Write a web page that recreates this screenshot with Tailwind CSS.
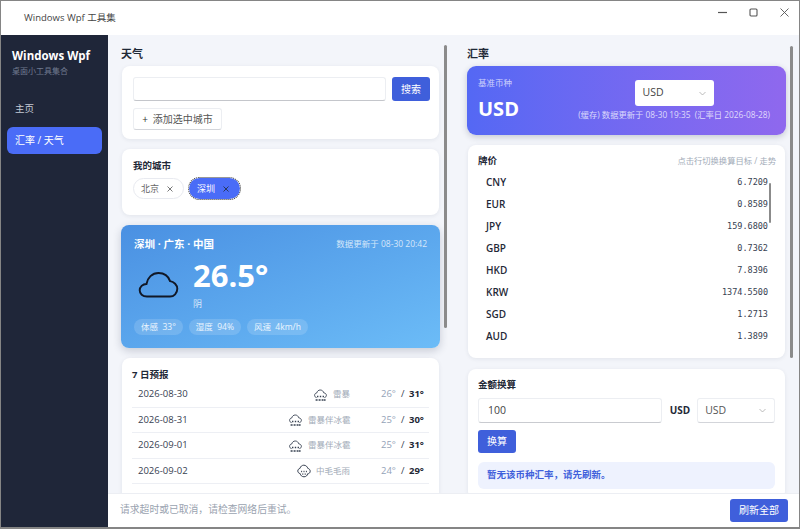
<!DOCTYPE html>
<html lang="zh-CN">
<head>
    <meta charset="UTF-8">
    <title>Windows Wpf 工具集</title>
    <script src="https://cdn.jsdelivr.net/npm/@tailwindcss/browser@4"></script>
</head>
<body class="w-[800px] h-[529px] overflow-hidden bg-white font-['Open_Sans','Noto_Sans_CJK_SC',sans-serif] text-[#1f2937]">
    <div class="flex flex-col w-[800px] h-[529px] border border-[#858585] border-b-2">
        <!-- title bar -->
        <div class="flex items-center h-[34px] shrink-0 bg-white">
            <span class="ml-[23px] text-[9.5px] text-[#444]">Windows Wpf 工具集</span>
            <div class="ml-auto self-start mt-[7px] mr-[10px] flex items-center gap-[22px] text-[#555]">
                <svg class="w-[9px] h-[9px]" viewBox="0 0 9 9"><path d="M0 4.5h9" stroke="currentColor" stroke-width="1.2"/></svg>
                <svg class="w-[9px] h-[9px]" viewBox="0 0 9 9"><rect x="1" y="1" width="7" height="7" rx="1" fill="none" stroke="currentColor" stroke-width="1.1"/></svg>
                <svg class="w-[9px] h-[9px]" viewBox="0 0 9 9"><path d="M.5.5l8 8M8.5.5l-8 8" stroke="currentColor" stroke-width="0.9"/></svg>
            </div>
        </div>
        <div class="flex flex-1 min-h-0">
            <!-- sidebar -->
            <aside class="w-[107px] shrink-0 bg-[#1f2639] px-[6px] pt-[13px]">
                <div class="pl-[5px] text-[11.5px] leading-[16px] font-bold text-white">Windows Wpf</div>
                <div class="pl-[5px] text-[8px] leading-[13px] text-[#6f7a90]">桌面小工具集合</div>
                <div class="mt-[19px] h-[26px] pl-[8px] flex items-center text-[9.5px] text-[#c5cad5]">主页</div>
                <div class="mt-[5px] h-[27px] pl-[8px] flex items-center rounded-[6px] bg-[#4a6cf7] text-[10px] text-white">汇率 / 天气</div>
            </aside>
            <div class="flex-1 min-w-0 flex flex-col bg-[#f3f5fa]">
                <div class="flex flex-1 min-h-0">
                    <!-- weather column -->
                    <div class="relative w-[345px] shrink-0 overflow-hidden pl-[13px] pr-[13px] pt-[10px]">
                        <h2 class="text-[11px] leading-[18px] font-bold text-[#1f2937]">天气</h2>
                        <div class="mt-[3px] mx-[1px] h-[73px] rounded-[8px] bg-white shadow-[0_1px_4px_rgba(30,40,70,0.08)] pl-[11px] pr-[9px] pt-[11px]">
                            <div class="flex gap-[6px]">
                                <div class="flex-1 h-[24px] rounded-[3px] bg-white border border-[#eceef2] border-b-[#c4c6cb]"></div>
                                <div class="w-[38px] h-[24px] rounded-[3px] bg-[#3f5fdb] flex items-center justify-center text-[10px] text-white">搜索</div>
                            </div>
                            <div class="mt-[7px] w-[89px] h-[22px] rounded-[3px] bg-white border border-[#eceef2] border-b-[#d3d5da] flex items-center justify-center gap-[5px] text-[10px] text-[#555]">
                                <span class="text-[#333]">+</span><span>添加选中城市</span>
                            </div>
                        </div>
                        <div class="mt-[10px] mx-[1px] h-[66px] rounded-[8px] bg-white shadow-[0_1px_4px_rgba(30,40,70,0.08)] px-[11px] pt-[9px]">
                            <div class="text-[9.5px] leading-[16px] font-bold text-[#1f2937]">我的城市</div>
                            <div class="mt-[4px] flex gap-[5px]">
                                <div class="w-[51px] h-[21px] rounded-full bg-white border border-[#e8eaf0] flex items-center pl-[7px] gap-[8px] text-[9px] text-[#666]"><span>北京</span>
                                    <svg class="w-[6px] h-[6px]" viewBox="0 0 6 6"><path d="M.5.5l5 5M5.5.5l-5 5" stroke="#555" stroke-width="0.8"/></svg></div>
                                <div class="w-[51px] h-[21px] rounded-full bg-[#4a6cf7] outline-1 outline-dotted outline-[#333] flex items-center pl-[8px] gap-[8px] text-[9px] text-white"><span>深圳</span>
                                    <svg class="w-[6px] h-[6px]" viewBox="0 0 6 6"><path d="M.5.5l5 5M5.5.5l-5 5" stroke="#1f2937" stroke-width="0.8"/></svg></div>
                            </div>
                        </div>
                        <div class="mt-[10px] h-[123px] rounded-[8px] bg-gradient-to-br from-[#4a90e2] to-[#6cbcf7] shadow-[0_3px_8px_rgba(30,40,70,0.2)] px-[13px] pt-[10px] text-white">
                            <div class="flex justify-between items-center">
                                <span class="text-[10.5px] leading-[18px] font-bold">深圳 · 广东 · 中国</span>
                                <span class="text-[8.5px] text-white/75">数据更新于 08-30 20:42</span>
                            </div>
                            <div class="flex mt-[2px]">
                                <svg class="ml-[4px] mt-[16px] w-[41px] h-[27px]" viewBox="0 0 42 28"><path d="M9 26.5C4.5 26.5 1.5 23.5 1.5 20C1.5 16.5 4.5 13.5 8.5 13.5C9.5 7 14.5 2 21 2C27.5 2 31.5 6 33 10.5C37 11 40.5 14.5 40.5 18.5C40.5 23 37 26.5 33 26.5Z" fill="none" stroke="#111827" stroke-width="2"/></svg>
                                <div class="ml-[14px]">
                                    <div class="text-[31px] leading-[41px] font-bold">26.5°</div>
                                    <div class="text-[9px] leading-[16px] text-white/75">阴</div>
                                </div>
                            </div>
                            <div class="mt-[7px] flex gap-[6px] text-[8.5px] text-white/85">
                                <span class="h-[16px] flex items-center px-[7px] rounded-full bg-white/15">体感&nbsp;&nbsp;33°</span>
                                <span class="h-[16px] flex items-center px-[7px] rounded-full bg-white/15">湿度&nbsp;&nbsp;94%</span>
                                <span class="h-[16px] flex items-center px-[7px] rounded-full bg-white/15">风速&nbsp;&nbsp;4km/h</span>
                            </div>
                        </div>
                        <div class="mt-[10px] mx-[1px] h-[160px] rounded-[8px] bg-white shadow-[0_1px_4px_rgba(30,40,70,0.08)] px-[10px] pt-[9px]">
                            <div class="text-[9.5px] leading-[15px] font-bold text-[#1f2937]">7 日预报</div>
                            <div class="flex items-center h-[26px] pl-[6px] pr-[5px] border-b border-[#edeff4] text-[9.5px]">
                                <span class="text-[#374151]">2026-08-30</span>
                                <svg class="ml-auto w-[13px] h-[12px]" viewBox="0 0 13 12"><path d="M2.6 8.6C1.3 8.4.6 7.4.6 6.3.6 5 1.6 4 2.8 3.9 3.2 2.1 4.6 1 6.2 1 8 1 9.4 2.2 9.8 3.9 11.2 4 12.4 5 12.4 6.3 12.4 7.4 11.6 8.4 10.4 8.6" fill="none" stroke="#374151" stroke-width="0.9"/><path d="M3 6.8h1.4v1.4H3zM5.8 6.8h1.4v1.4H5.8zM8.6 6.8H10v1.4H8.6z" fill="#374151"/><path d="M1.6 11h2M4.6 11h2M7.6 11h2M10 11h1.6" stroke="#374151" stroke-width="1.3"/></svg>
                                <span class="ml-[6px] w-[18px] whitespace-nowrap text-[8.5px] text-[#a2abb8]">雷暴</span>
                                <span class="ml-[30px] w-[14px] text-[#94a3b8]">26°</span>
                                <span class="ml-[6px] w-[3px] text-[#374151]">/</span>
                                <span class="ml-[5px] w-[15px] font-bold text-[#1f2937]">31°</span>
                            </div>
                            <div class="flex items-center h-[25.4px] pl-[6px] pr-[5px] border-b border-[#edeff4] text-[9.5px]">
                                <span class="text-[#374151]">2026-08-31</span>
                                <svg class="ml-auto w-[13px] h-[12px]" viewBox="0 0 13 12"><path d="M2.6 8.6C1.3 8.4.6 7.4.6 6.3.6 5 1.6 4 2.8 3.9 3.2 2.1 4.6 1 6.2 1 8 1 9.4 2.2 9.8 3.9 11.2 4 12.4 5 12.4 6.3 12.4 7.4 11.6 8.4 10.4 8.6" fill="none" stroke="#374151" stroke-width="0.9"/><path d="M3 6.8h1.4v1.4H3zM5.8 6.8h1.4v1.4H5.8zM8.6 6.8H10v1.4H8.6z" fill="#374151"/><path d="M1.6 11h2M4.6 11h2M7.6 11h2M10 11h1.6" stroke="#374151" stroke-width="1.3"/></svg>
                                <span class="ml-[6px] w-[43px] whitespace-nowrap text-[8.5px] text-[#a2abb8]">雷暴伴冰雹</span>
                                <span class="ml-[30px] w-[14px] text-[#94a3b8]">25°</span>
                                <span class="ml-[6px] w-[3px] text-[#374151]">/</span>
                                <span class="ml-[5px] w-[15px] font-bold text-[#1f2937]">30°</span>
                            </div>
                            <div class="flex items-center h-[25.4px] pl-[6px] pr-[5px] border-b border-[#edeff4] text-[9.5px]">
                                <span class="text-[#374151]">2026-09-01</span>
                                <svg class="ml-auto w-[13px] h-[12px]" viewBox="0 0 13 12"><path d="M2.6 8.6C1.3 8.4.6 7.4.6 6.3.6 5 1.6 4 2.8 3.9 3.2 2.1 4.6 1 6.2 1 8 1 9.4 2.2 9.8 3.9 11.2 4 12.4 5 12.4 6.3 12.4 7.4 11.6 8.4 10.4 8.6" fill="none" stroke="#374151" stroke-width="0.9"/><path d="M3 6.8h1.4v1.4H3zM5.8 6.8h1.4v1.4H5.8zM8.6 6.8H10v1.4H8.6z" fill="#374151"/><path d="M1.6 11h2M4.6 11h2M7.6 11h2M10 11h1.6" stroke="#374151" stroke-width="1.3"/></svg>
                                <span class="ml-[6px] w-[43px] whitespace-nowrap text-[8.5px] text-[#a2abb8]">雷暴伴冰雹</span>
                                <span class="ml-[30px] w-[14px] text-[#94a3b8]">25°</span>
                                <span class="ml-[6px] w-[3px] text-[#374151]">/</span>
                                <span class="ml-[5px] w-[15px] font-bold text-[#1f2937]">31°</span>
                            </div>
                            <div class="flex items-center h-[25.4px] pl-[6px] pr-[5px] border-b border-[#edeff4] text-[9.5px]">
                                <span class="text-[#374151]">2026-09-02</span>
                                <svg class="ml-auto w-[14px] h-[14px]" viewBox="0 0 14 14"><path d="M3.2 9.6C1.7 9.4.8 8.2.8 7 .8 5.6 1.8 4.6 3 4.4 3.4 2.4 5 1.2 6.8 1.2 8.8 1.2 10.4 2.6 10.8 4.4 12.2 4.6 13.2 5.8 13.2 7.2 13.2 8.6 12.2 9.8 10.6 9.8 10.4 11.6 9 12.8 7 12.8 5 12.8 3.4 11.4 3.2 9.6Z" fill="none" stroke="#374151" stroke-width="1"/><path d="M4.6 6.8v1.4M7 6.8v1.4M9.4 6.8v1.4M5.8 9.4v1.4M8.2 9.4v1.4" stroke="#374151" stroke-width="1"/></svg>
                                <span class="ml-[5px] w-[35px] whitespace-nowrap text-[8.5px] text-[#a2abb8]">中毛毛雨</span>
                                <span class="ml-[30px] w-[14px] text-[#94a3b8]">24°</span>
                                <span class="ml-[6px] w-[3px] text-[#374151]">/</span>
                                <span class="ml-[5px] w-[15px] font-bold text-[#1f2937]">29°</span>
                            </div>
                        </div>
                        <div class="absolute right-[6px] top-[10px] w-[3px] h-[283px] rounded-full bg-[#8b8b8b]"></div>
                    </div>
                    <!-- rates column -->
                    <div class="relative flex-1 min-w-0 overflow-hidden pl-[14px] pr-[6px] pt-[10px]">
                        <div class="w-[319px]">
                            <h2 class="text-[11px] leading-[18px] font-bold text-[#1f2937]">汇率</h2>
                            <div class="mt-[3px] h-[69px] rounded-[9px] bg-gradient-to-r from-[#5468f4] to-[#8f68ee] shadow-[0_2px_6px_rgba(30,40,70,0.22)] pl-[11px] pr-[16px] flex text-white">
                                <div class="pt-[9px]">
                                    <div class="text-[8.5px] leading-[15px] text-white/70">基准币种</div>
                                    <div class="mt-[5px] text-[20px] leading-[28px] font-bold">USD</div>
                                </div>
                                <div class="ml-auto flex flex-col items-center pt-[14px]">
                                    <div class="w-[79px] h-[26px] rounded-[3px] bg-white flex items-center justify-between px-[8px] text-[10.5px] text-[#444]">
                                        <span>USD</span>
                                        <svg class="w-[7px] h-[5px]" viewBox="0 0 7 5"><path d="M.5 1l3 3 3-3" fill="none" stroke="#aaa" stroke-width="0.8"/></svg>
                                    </div>
                                    <div class="mt-[2px] text-[8.3px] leading-[14px] text-white/75 whitespace-nowrap">(缓存)&nbsp;数据更新于 08-30 19:35&nbsp;&nbsp;(汇率日 2026-08-28)</div>
                                </div>
                            </div>
                            <div class="relative mt-[10px] h-[213px] mx-[1px] rounded-[8px] bg-white shadow-[0_1px_4px_rgba(30,40,70,0.08)] pl-[10px] pr-[9px] pt-[8px]">
                                <div class="flex justify-between items-center h-[16px]">
                                    <span class="text-[9.5px] font-bold text-[#1f2937]">牌价</span>
                                    <span class="text-[8.3px] text-[#a2abb8]">点击行切换换算目标 / 走势</span>
                                </div>
                                <div class="mt-[2px] pl-[8px] pr-[8px] text-[10px]">
                                    <div class="flex justify-between items-center h-[22px]"><span class="font-semibold">CNY</span><span class="font-['DejaVu_Sans_Mono',monospace] text-[8.5px] text-[#374151]">6.7209</span></div>
                                    <div class="flex justify-between items-center h-[22px]"><span class="font-semibold">EUR</span><span class="font-['DejaVu_Sans_Mono',monospace] text-[8.5px] text-[#374151]">0.8589</span></div>
                                    <div class="flex justify-between items-center h-[22px]"><span class="font-semibold">JPY</span><span class="font-['DejaVu_Sans_Mono',monospace] text-[8.5px] text-[#374151]">159.6800</span></div>
                                    <div class="flex justify-between items-center h-[22px]"><span class="font-semibold">GBP</span><span class="font-['DejaVu_Sans_Mono',monospace] text-[8.5px] text-[#374151]">0.7362</span></div>
                                    <div class="flex justify-between items-center h-[22px]"><span class="font-semibold">HKD</span><span class="font-['DejaVu_Sans_Mono',monospace] text-[8.5px] text-[#374151]">7.8396</span></div>
                                    <div class="flex justify-between items-center h-[22px]"><span class="font-semibold">KRW</span><span class="font-['DejaVu_Sans_Mono',monospace] text-[8.5px] text-[#374151]">1374.5500</span></div>
                                    <div class="flex justify-between items-center h-[22px]"><span class="font-semibold">SGD</span><span class="font-['DejaVu_Sans_Mono',monospace] text-[8.5px] text-[#374151]">1.2713</span></div>
                                    <div class="flex justify-between items-center h-[22px]"><span class="font-semibold">AUD</span><span class="font-['DejaVu_Sans_Mono',monospace] text-[8.5px] text-[#374151]">1.3899</span></div>
                                </div>
                                <div class="absolute right-[14px] top-[38px] w-[2px] h-[40px] rounded-full bg-[#8b8b8b]"></div>
                            </div>
                            <div class="mt-[11px] h-[130px] mx-[1px] rounded-[8px] bg-white shadow-[0_1px_4px_rgba(30,40,70,0.08)] px-[10px] pt-[8px]">
                                <div class="text-[9.5px] leading-[16px] font-bold text-[#1f2937]">金额换算</div>
                                <div class="mt-[5px] flex items-center">
                                    <div class="w-[184px] h-[25px] rounded-[3px] bg-white border border-[#eceef2] border-b-[#c9cbd0] flex items-center pl-[9px] text-[10.5px] text-[#444]">100</div>
                                    <span class="ml-[8px] text-[10px] font-bold">USD</span>
                                    <div class="ml-[7px] w-[78px] h-[25px] rounded-[3px] bg-white border border-[#eceef2] border-b-[#d3d5da] flex items-center justify-between pl-[7px] pr-[8px] text-[10.5px] text-[#555]">
                                        <span>USD</span>
                                        <svg class="w-[7px] h-[5px]" viewBox="0 0 7 5"><path d="M.5 1l3 3 3-3" fill="none" stroke="#aaa" stroke-width="0.8"/></svg>
                                    </div>
                                </div>
                                <div class="mt-[7px] w-[38px] h-[23px] rounded-[3px] bg-[#3f5fdb] flex items-center justify-center text-[10px] text-white">换算</div>
                                <div class="mt-[9px] h-[27px] rounded-[6px] bg-[#eef2fe] flex items-center pl-[9px] text-[9.5px] font-bold text-[#3f5fdb]">暂无该币种汇率，请先刷新。</div>
                            </div>
                        </div>
                        <div class="absolute right-[6px] top-[11px] w-[3px] h-[312px] rounded-full bg-[#8b8b8b]"></div>
                    </div>
                </div>
                <!-- footer -->
                <div class="h-[34px] shrink-0 bg-white border-t border-[#eceef3] flex items-center justify-between pl-[12px] pr-[11px]">
                    <span class="text-[9.8px] text-[#9aa3b0]">请求超时或已取消，请检查网络后重试。</span>
                    <div class="w-[58px] h-[23px] rounded-[3px] bg-[#3f5fdb] flex items-center justify-center text-[10px] text-white">刷新全部</div>
                </div>
            </div>
        </div>
    </div>
</body>
</html>
